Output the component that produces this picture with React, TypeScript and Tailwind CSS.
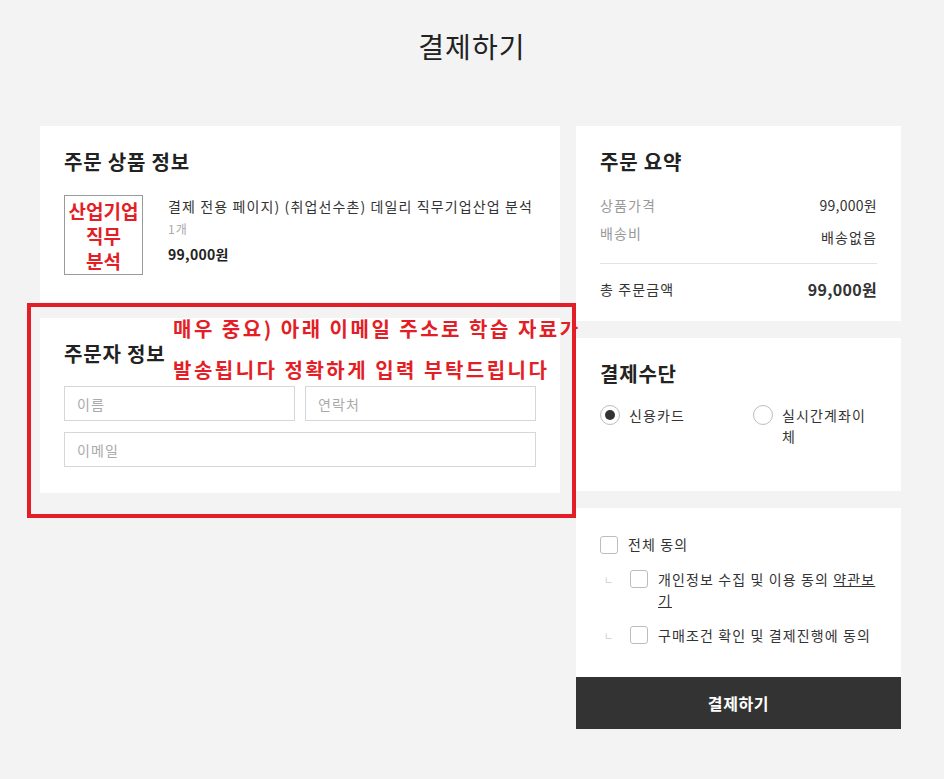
import React from "react";

const font = { fontFamily: '"Noto Sans CJK KR", "Noto Sans", sans-serif' };

function Checkbox() {
  return <span className="inline-block w-[18px] h-[18px] shrink-0 rounded-[3px] border border-[#bdbdbd] bg-white" />;
}

export default function App() {
  return (
    <div className="min-h-[779px] bg-[#f3f3f3] text-[#222] tracking-[0.07em]" style={font}>
      <div className="relative w-[944px]">
        <h1 className="pt-[26px] h-[126px] text-center text-[28px] font-normal leading-[40px] text-[#222] tracking-[0.04em]">결제하기</h1>
        <div className="flex gap-4 pl-[40px]">
          {/* left column */}
          <div className="w-[520px] flex flex-col gap-4">
            <div className="bg-white h-[176px] px-6 pt-[22px]">
              <h2 className="text-[20px] font-bold leading-[28px] text-[#222] tracking-[0.04em]">주문 상품 정보</h2>
              <div className="mt-[19px] flex">
                <div className="w-[79px] h-[80px] border border-[#9a9a9a] flex flex-col items-center justify-center text-[#e41e26] font-bold text-[19px] leading-[25px] tracking-[0px]">
                  <span>산업기업</span>
                  <span>직무</span>
                  <span>분석</span>
                </div>
                <div className="ml-[25px] pt-[1px]">
                  <div className="text-[14px] leading-[20px] text-[#333]">결제 전용 페이지) (취업선수촌) 데일리 직무기업산업 분석</div>
                  <div className="mt-[4px] text-[12px] leading-[18px] text-[#aaa]">1개</div>
                  <div className="mt-[6px] text-[14px] leading-[20px] font-bold text-[#222] tracking-[0.02em]">99,000원</div>
                </div>
              </div>
            </div>
            <div className="bg-white h-[175px] px-6 pt-[22px]">
              <h2 className="text-[20px] font-bold leading-[28px] text-[#222] tracking-[0.04em]">주문자 정보</h2>
              <div className="mt-[18px] flex gap-[10px]">
                <input className="w-[231px] h-[35px] border border-[#d6d6d6] px-3 text-[14px] outline-none placeholder:text-[#aaa]" placeholder="이름" style={font} />
                <input className="w-[231px] h-[35px] border border-[#d6d6d6] px-3 text-[14px] outline-none placeholder:text-[#aaa]" placeholder="연락처" style={font} />
              </div>
              <input className="mt-[11px] block w-[472px] h-[35px] border border-[#d6d6d6] px-3 text-[14px] outline-none placeholder:text-[#aaa]" placeholder="이메일" style={font} />
            </div>
          </div>
          {/* right column */}
          <div className="w-[325px] flex flex-col">
            <div className="bg-white h-[195px] px-6 pt-[22px]">
              <h2 className="text-[20px] font-bold leading-[28px] text-[#222] tracking-[0.04em]">주문 요약</h2>
              <div className="mt-[19px] flex justify-between text-[14px] leading-[20px]">
                <span className="text-[#999]">상품가격</span>
                <span className="text-[#333] tracking-[0.02em]">99,000원</span>
              </div>
              <div className="mt-[8px] flex justify-between text-[14px] leading-[20px]">
                <span className="text-[#999]">배송비</span>
                <span className="text-[#333] pt-[4px]">배송없음</span>
              </div>
              <div className="mt-[16px] border-t border-[#e3e3e3]" />
              <div className="mt-[13px] flex justify-between items-center leading-[24px]">
                <span className="text-[14px] text-[#333]">총 주문금액</span>
                <span className="text-[16px] font-bold text-[#333] tracking-[0.02em]">99,000원</span>
              </div>
            </div>
            <div className="mt-[17px] bg-white h-[153px] px-6 pt-[22px]">
              <h2 className="text-[20px] font-bold leading-[28px] text-[#222] tracking-[0.04em]">결제수단</h2>
              <div className="mt-[17px] flex text-[14px] leading-[21px] text-[#333]">
                <div className="w-[153px] flex items-start gap-[9px]">
                  <span className="w-[20px] h-[20px] rounded-full border border-[#bdbdbd] flex items-center justify-center shrink-0">
                    <span className="w-[10px] h-[10px] rounded-full bg-[#333]" />
                  </span>
                  <span>신용카드</span>
                </div>
                <div className="w-[124px] flex items-start gap-[9px]">
                  <span className="w-[20px] h-[20px] rounded-full border border-[#bdbdbd] shrink-0" />
                  <span>실시간계좌이체</span>
                </div>
              </div>
            </div>
            <div className="mt-[17px] bg-white h-[169px] px-6 pt-[26px] text-[14px] leading-[21px] text-[#333]">
              <div className="flex items-center gap-[10px]">
                <Checkbox />
                <span>전체 동의</span>
              </div>
              <div className="mt-[14px] flex items-start">
                <span className="w-[30px] shrink-0 pl-[4px] text-[10px] leading-[21px] text-[#ccc]">ㄴ</span>
                <span className="mt-[1px]"><Checkbox /></span>
                <p className="ml-[10px] w-[219px]">개인정보 수집 및 이용 동의 <u>약관보기</u></p>
              </div>
              <div className="mt-[14px] flex items-start">
                <span className="w-[30px] shrink-0 pl-[4px] text-[10px] leading-[21px] text-[#ccc]">ㄴ</span>
                <span className="mt-[1px]"><Checkbox /></span>
                <span className="ml-[10px] whitespace-nowrap">구매조건 확인 및 결제진행에 동의</span>
              </div>
            </div>
            <button className="h-[52px] w-full bg-[#333] text-white text-[16px] font-bold tracking-[0.04em]" style={font}>결제하기</button>
          </div>
        </div>

        {/* annotation overlay */}
        <div className="absolute left-[27px] top-[303px] w-[549px] h-[215px] border-4 border-[#e41e26] pointer-events-none" />
        <div className="absolute left-[173px] top-[308px] w-[405px] overflow-hidden whitespace-nowrap text-[20px] font-bold leading-[41px] tracking-[2.5px] text-[#e41e26] pointer-events-none">
          <div>매우 중요) 아래 이메일 주소로 학습 자료가</div>
          <div>발송됩니다 정확하게 입력 부탁드립니다</div>
        </div>
      </div>
    </div>
  );
}
